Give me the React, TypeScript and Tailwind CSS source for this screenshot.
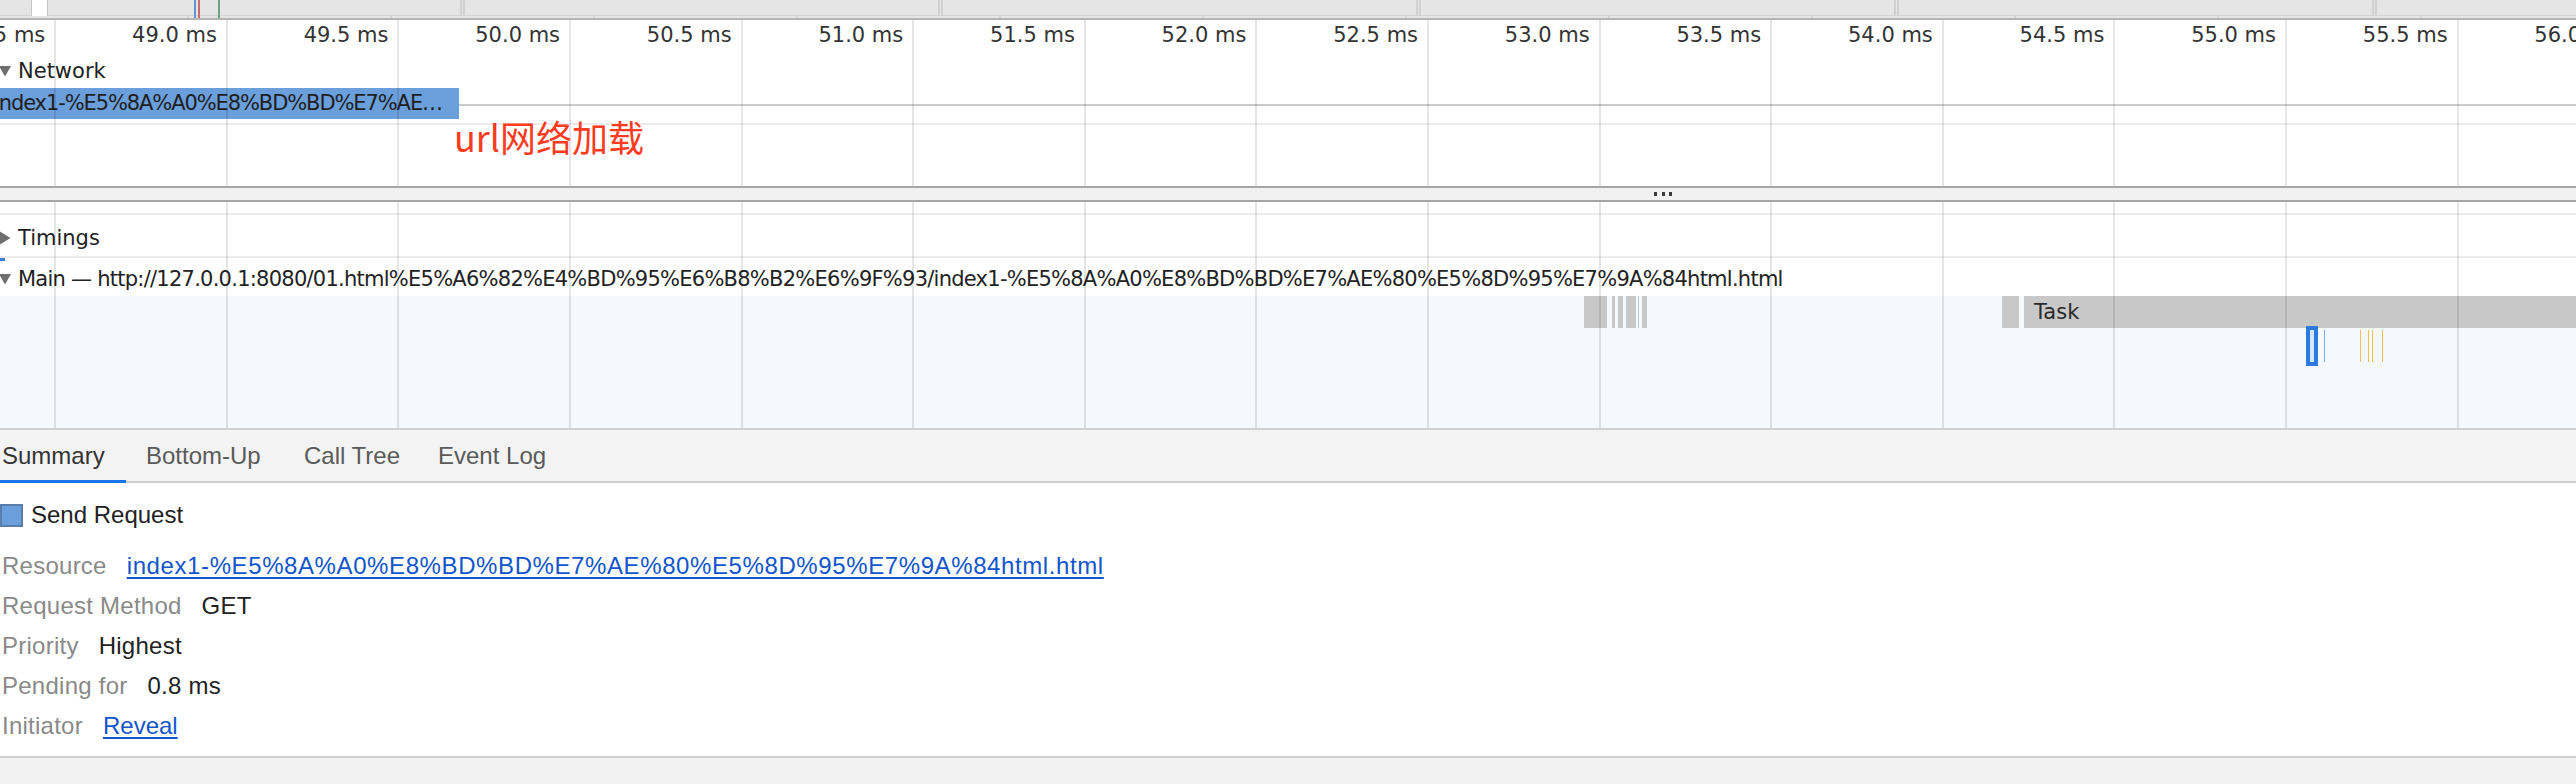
import React from 'react';

// time axis: one cell per 0.5 ms, the right edge of each cell is a grid line
const ticks = Array.from({ length: 16 }, (_, i) => `${(48.5 + i * 0.5).toFixed(1)} ms`);

const overviewTicks = Array.from({ length: 12 }, (_, i) => 187 + i * 203);
const overviewSeps = Array.from({ length: 5 }, (_, i) => 460 + i * 478);

const flameBlocks = [
  { left: 1584, width: 23.3 },
  { left: 1612, width: 3.3 },
  { left: 1618, width: 5.3 },
  { left: 1626, width: 9.7 },
  { left: 1638, width: 1.3 },
  { left: 1641.7, width: 5.3 },
  { left: 2002, width: 16.5 },
];

const thinMarks = [
  { left: 2323.7, color: '#7aa8ec' },
  { left: 2360, color: '#f4c04c' },
  { left: 2368, color: '#f4c04c' },
  { left: 2372, color: '#f4c04c' },
  { left: 2382, color: '#f4c04c' },
];

const details = [
  { label: 'Resource', value: 'index1-%E5%8A%A0%E8%BD%BD%E7%AE%80%E5%8D%95%E7%9A%84html.html', link: true, wide: true },
  { label: 'Request Method', value: 'GET' },
  { label: 'Priority', value: 'Highest' },
  { label: 'Pending for', value: '0.8 ms' },
  { label: 'Initiator', value: 'Reveal', link: true },
];

const GridLines = () => (
  <div className="pointer-events-none absolute inset-0 ml-[-115.3px] flex">
    {ticks.map((t) => (
      <div key={t} className="h-full w-[171.6px] shrink-0 border-r-2 border-black/10" />
    ))}
  </div>
);

const Triangle = ({ dir }: { dir: 'down' | 'right' }) => (
  <svg width="12" height="14" viewBox="0 0 12 14" className="ml-[-1px] shrink-0">
    {dir === 'down' ? (
      <polygon points="0,2 12,2 6,12.5" fill="#6e6e6e" />
    ) : (
      <polygon points="0,0 0,14 11.5,7" fill="#6e6e6e" />
    )}
  </svg>
);

export default function App() {
  return (
    <div className="relative flex h-[784px] w-[2576px] flex-col overflow-hidden bg-white font-['DejaVu_Sans',sans-serif] text-[21px] text-[#222]">
      {/* overview strip */}
      <div className="relative h-[20px] shrink-0 border-b-2 border-[#b4b4b4] bg-[#e5e5e5]">
        <div className="absolute inset-x-0 top-[15px] h-px bg-[#d5d5d5]" />
        {overviewTicks.map((x) => (
          <div key={x} className="absolute top-[15px] h-[3px] w-[1.5px] bg-[#d2d2d2]" style={{ left: x }} />
        ))}
        {overviewSeps.map((x) => (
          <div key={x} className="absolute top-0 flex h-[16px] gap-[1.5px]" style={{ left: x }}>
            <div className="h-full w-[1.5px] bg-[#d0d0d0]" />
            <div className="h-full w-[1.5px] bg-[#d0d0d0]" />
          </div>
        ))}
        <div className="absolute left-[31px] top-0 h-[16px] w-[17px] border-x-[1.5px] border-[#c6c6c6] bg-white" />
        <div className="absolute left-[194px] top-0 h-[18px] w-[2px] bg-[#6390d4]" />
        <div className="absolute left-[198px] top-0 h-[18px] w-[1.5px] bg-[#c46d70]" />
        <div className="absolute left-[218px] top-0 h-[18px] w-[1.7px] bg-[#6ea27e]" />
      </div>

      {/* network track */}
      <div className="relative flex h-[166px] shrink-0 flex-col overflow-hidden">
        <div className="ml-[-115.3px] flex h-[30px] shrink-0 pt-[1px] leading-[29px] text-[#333]">
          {ticks.map((t) => (
            <div key={t} className="w-[171.6px] shrink-0 whitespace-nowrap pr-[11px] text-right">
              {t}
            </div>
          ))}
        </div>
        <div className="h-[38px] shrink-0 pt-[9px]">
          <div className="flex h-[24px] items-center leading-[24px]">
            <Triangle dir="down" />
            <span className="ml-[7px]">Network</span>
          </div>
        </div>
        <div className="relative h-[37px] shrink-0 border-b-2 border-[#ebebeb]">
          <div className="absolute inset-x-0 top-[16px] h-[2px] bg-[#cbcbcb]" />
          <div className="relative h-[31px] w-[459px] overflow-hidden whitespace-nowrap bg-[#6a9fdc] leading-[31px] tracking-[-1.1px] text-[#1e1e1e]">
            <span className="ml-[-6px]">index1-%E5%8A%A0%E8%BD%BD%E7%AE…</span>
          </div>
        </div>
        <div className="flex-1" />
        <GridLines />
      </div>

      {/* resizer */}
      <div className="flex h-[16px] shrink-0 items-center border-y-2 border-[#a6a6a6] bg-[#f1f1f1] pl-[1654px]">
        <div className="flex gap-[4.3px]">
          <div className="h-[3.3px] w-[3.3px] bg-[#3a3a3a]" />
          <div className="h-[3.3px] w-[3.3px] bg-[#3a3a3a]" />
          <div className="h-[3.3px] w-[3.3px] bg-[#3a3a3a]" />
        </div>
      </div>

      {/* main track */}
      <div className="relative flex h-[228px] shrink-0 flex-col overflow-hidden border-b-2 border-[#d0d0d0]">
        <div className="h-[11px] shrink-0" />
        <div className="h-[45px] shrink-0 border-y-2 border-[#ececec] pt-[11px]">
          <div className="flex h-[24px] items-center leading-[24px]">
            <Triangle dir="right" />
            <span className="ml-[7px]">Timings</span>
          </div>
        </div>
        <div className="h-[38px] shrink-0 pt-[9px]">
          <div className="flex h-[24px] items-center whitespace-nowrap leading-[24px] tracking-[-0.75px]">
            <Triangle dir="down" />
            <span className="ml-[7px]">
              Main — http://127.0.0.1:8080/01.html%E5%A6%82%E4%BD%95%E6%B8%B2%E6%9F%93/index1-%E5%8A%A0%E8%BD%BD%E7%AE%80%E5%8D%95%E7%9A%84html.html
            </span>
          </div>
        </div>
        <div className="relative flex-1 bg-[#f5f8fd]">
          {flameBlocks.map((b) => (
            <div key={b.left} className="absolute top-0 h-[32px] bg-[#c8c8c8]" style={{ left: b.left, width: b.width }} />
          ))}
          <div className="absolute left-[2024px] right-0 top-0 h-[32px] bg-[#c8c8c8] pl-[10px] leading-[32px] text-[#2a2a2a]">
            Task
          </div>
          <div className="absolute left-[2306px] top-[30px] flex h-[40px] w-[12px] justify-center bg-[#2a7ae2] py-[4px]">
            <div className="h-full w-[1.7px] bg-[#d6e4f8]" />
            <div className="ml-[0.6px] h-full w-[1.4px] bg-[#d6e4f8]" />
          </div>
          {thinMarks.map((m) => (
            <div key={m.left} className="absolute top-[34px] h-[32px] w-[1.4px]" style={{ left: m.left, backgroundColor: m.color }} />
          ))}
        </div>
        <div className="absolute left-0 top-[56px] h-[3.4px] w-[4.6px] bg-[#3b7be0]" />
        <GridLines />
      </div>

      {/* tabs */}
      <div className="flex h-[53px] shrink-0 border-b-2 border-[#cfcfcf] bg-[#f3f3f3] font-['Liberation_Sans',Arial,sans-serif] text-[24px] leading-[24px] text-[#5a5a5a]">
        <div className="mb-[-2px] w-[126px] border-b-[3px] border-[#1a73e8] pl-[2px] pt-[14px] text-[#333]">Summary</div>
        <div className="w-[158px] pl-[20px] pt-[14px]">Bottom-Up</div>
        <div className="w-[134px] pl-[20px] pt-[14px]">Call Tree</div>
        <div className="pl-[20px] pt-[14px]">Event Log</div>
      </div>

      {/* summary details */}
      <div className="flex flex-1 flex-col pt-[12px] font-['Liberation_Sans',Arial,sans-serif] text-[24px]">
        <div className="flex h-[40px] shrink-0 items-center">
          <div className="h-[23px] w-[23px] border-2 border-[#5b7dab] bg-[#6a9fdc]" />
          <span className="ml-[8px] leading-[40px] text-[#222]">Send Request</span>
        </div>
        <div className="mt-[11px] flex flex-col">
          {details.map((d) => (
            <div key={d.label} className="flex h-[40px] items-center gap-[20px] whitespace-nowrap pl-[2px] leading-[40px] tracking-[0.25px]">
              <span className="text-[#8a8a8a]">{d.label}</span>
              {d.link ? (
                <span
                  className={
                    d.wide
                      ? 'tracking-[0.6px] text-[#1155cc] underline decoration-[2px] underline-offset-[3px]'
                      : 'tracking-[0px] text-[#1155cc] underline decoration-[2px] underline-offset-[3px]'
                  }
                >
                  {d.value}
                </span>
              ) : (
                <span className="text-[#222]">{d.value}</span>
              )}
            </div>
          ))}
        </div>
      </div>

      <div className="h-[28px] shrink-0 border-t-2 border-[#d0d0d0] bg-[#f2f2f2]" />

      {/* annotation */}
      <div className="absolute left-[454px] top-[118px] font-['Noto_Sans_CJK_SC',sans-serif] text-[36px] leading-[36px] text-[#ff3b21]">
        url网络加载
      </div>
    </div>
  );
}
